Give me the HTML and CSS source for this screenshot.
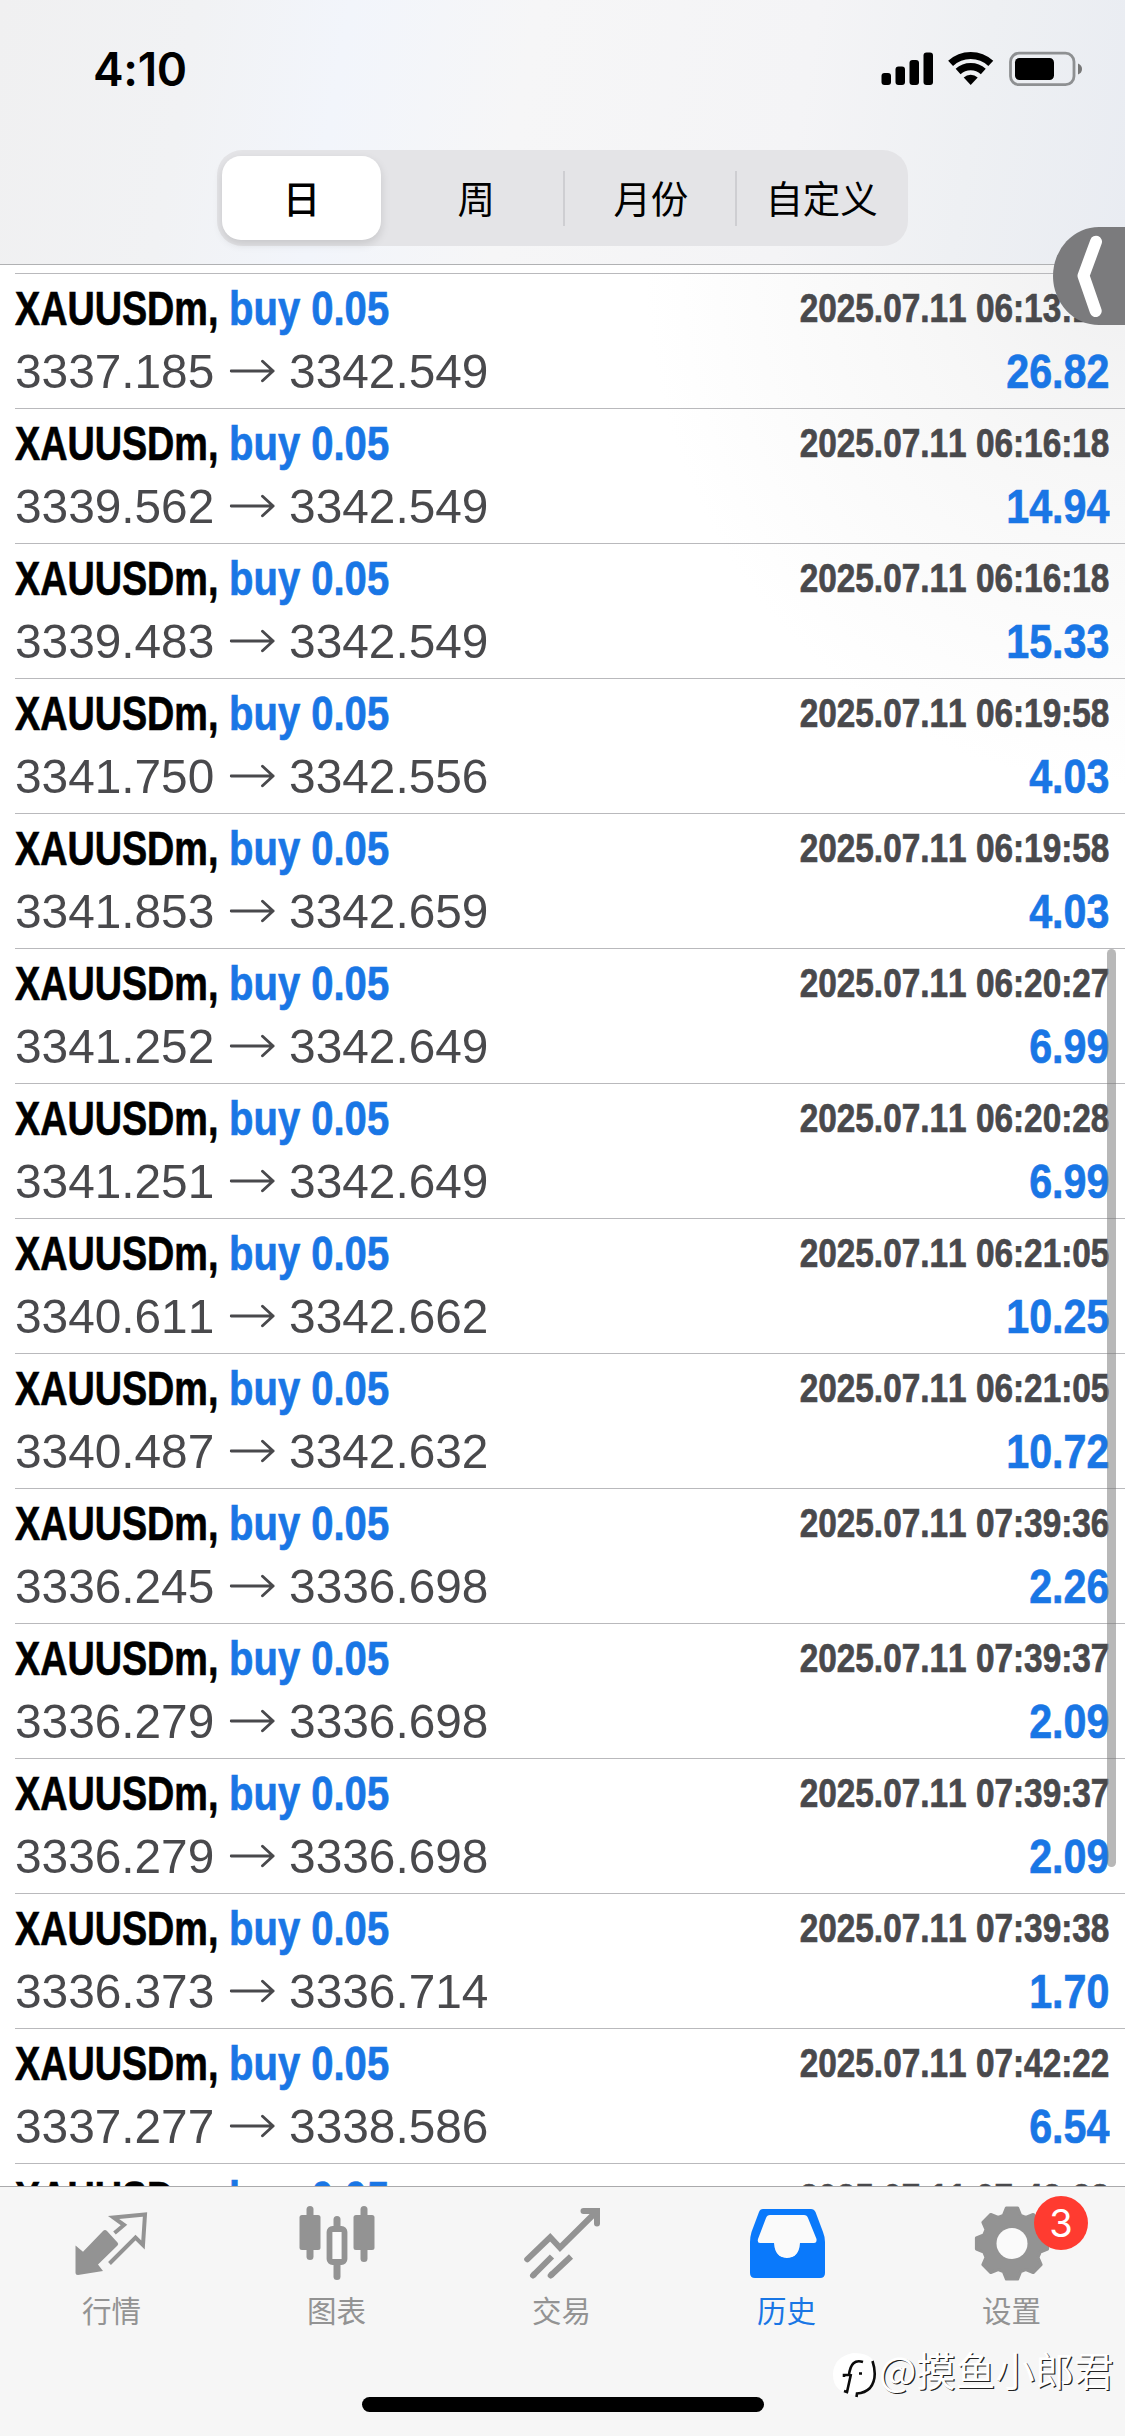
FILE: index.html
```html
<!DOCTYPE html>
<html lang="zh-CN">
<head>
<meta charset="utf-8">
<title>历史</title>
<link rel="stylesheet" href="styles.css">
</head>
<body>
<div class="screen">
  <header class="top">
    <div class="status">
      <span class="clock">4:10</span>
      <svg class="status-icons" viewBox="0 0 201 36" width="201" height="36">
        <rect x="0.500" y="22" width="9.500" height="12" rx="3"/><rect x="14.500" y="15.500" width="9.500" height="18.500" rx="3"/><rect x="28.500" y="9" width="9.500" height="25" rx="3"/><rect x="42.500" y="1.500" width="9.500" height="32.500" rx="3"/>
        <g fill="none" stroke="#000" stroke-width="7.200"><path d="M69.600 12.400A29.500 29.500 0 0 1 109.800 12.400"/><path d="M77.100 20.500A18.500 18.500 0 0 1 102.300 20.500"/></g>
        <path d="M82.700 26.500A10.300 10.300 0 0 1 96.700 26.500L89.700 34Z"/>
        <rect x="129.500" y="2.200" width="63.500" height="31.500" rx="8.500" fill="none" stroke="#8e9092" stroke-width="2.800"/>
        <rect x="134" y="7" width="39" height="22" rx="4.500"/><path d="M197 12.500Q201 14 201 18T197 23.500Z" fill="#777"/>
      </svg>
    </div>
    <nav class="segments">
      <span class="segment active">日</span><span class="segment">周</span><span class="segment split month">月份</span><span class="segment split">自定义</span>
    </nav>
  </header>
  <main class="list" id="list"></main>
  <footer class="tabs">
    <nav class="tab-row">
      <div class="tab"><svg viewBox="0 0 76 76"><path d="M1.500 39.500L9 45.700 29 25Q31 23 33 25L43.500 36.500Q45 38 43.500 39.500L24 58.500 29 65 4 69Q1.500 69 1.500 66.500Z"/><path fill="none" stroke="#939393" stroke-width="4" d="M40.500 27L50 19 39.500 11.500 71 8.500 69 39 61.500 31.500 35.500 57.500"/></svg><span>行情</span></div>
      <div class="tab"><svg viewBox="0 0 76 76"><rect x="0.500" y="9" width="21" height="35" rx="2.500"/><rect x="7.500" y="0" width="7" height="54" rx="3.500"/><rect x="54.500" y="9" width="21" height="35" rx="2.500"/><rect x="61.500" y="0" width="7" height="56" rx="3.500"/><rect x="34.500" y="10" width="7" height="14" rx="3.500"/><rect x="34.500" y="56" width="7" height="18" rx="3.500"/><rect x="30.500" y="23" width="15" height="33" rx="3" fill="#fafafa" stroke="#939393" stroke-width="5.800"/></svg><span>图表</span></div>
      <div class="tab"><svg viewBox="0 0 76 76"><g fill="none" stroke="#939393" stroke-width="6"><path stroke-linecap="round" d="M3.200 53.300L26.200 31.300 36 41.700 71 7"/><path stroke-linecap="round" d="M59.500 5H73V17.500"/><path stroke-linecap="round" d="M9 69.500L10 68.500M26.700 69.500L27.700 68.500"/><path d="M9 69.500L28 50.500M26.700 69.500L47 50.500"/></g></svg><span>交易</span></div>
      <div class="tab on"><svg viewBox="0 0 76 76"><path fill="#fafafa" d="M15 6H61L71 39H5Z"/><path d="M5 37H25Q26 52 38 52T51 37H71V60H5Z" fill="#0a79fb"/><path d="M24 36H52Q51 52 38 52T24 36Z" fill="#fafafa"/><path fill-rule="evenodd" d="M14 3H62Q65 3 66.500 6L74 26Q76 31 76 36V67Q76 72 71 72H6Q1 72 1 67V36Q1 31 2.500 26L10 6Q11 3 14 3ZM21 9Q18 9 17 12L9 33Q8 37 11 37H25Q26 52 38 52T51 37H65Q68 37 67.500 33L59 12Q58 9 55 9Z"/></svg><span>历史</span></div>
      <div class="tab"><svg viewBox="0 0 76 76" id="gear"></svg><span>设置</span><b class="badge">3</b></div>
    </nav>
    <div class="home"></div>
  </footer>
  <div class="scrollbar"></div>
  <div class="handle"><svg viewBox="0 0 72 98" width="72" height="98"><path d="M43 14.700L30.500 48.700 42.700 84" fill="none" stroke="#fff" stroke-width="12" stroke-linecap="round" stroke-linejoin="round"/></svg></div>
  <div class="watermark"><svg viewBox="0 0 46 48" width="46" height="48"><path d="M22 2Q42 2 43.500 14Q46 41 28 44L24 44Q2 42 2 24T22 2Z" fill="#fff"/><path d="M32 11Q20 7 18 24H13V26M20 23L16 41L13 40M41.500 10Q47 27 39 37Q34 42 26 42.500L25.500 46M28 22.500H31" fill="none" stroke="#0b0b0b" stroke-width="2.600"/></svg><span>@摸鱼小郎君</span></div>
</div>
<script src="script.js"></script>
</body>
</html>
```
FILE: styles.css
```css
* { box-sizing: border-box; }
body { margin: 0; background: #fff; font-family: "Liberation Sans", "Noto Sans CJK SC", sans-serif; }
.screen { position: relative; width: 1125px; height: 2436px; overflow: hidden; display: flex; flex-direction: column; background: #fff; }
.top { height: 265px; flex: none; border-bottom: 1px solid #b0b1b3; background: linear-gradient(100deg, #f0f0f1 0%, #f1f2f4 17%, #f2f5fb 30%, #f6f6f7 46%, #f4f4f6 70%, #eef0f3 85%, #e9ecf2 100%); }
.status { height: 150px; display: flex; justify-content: space-between; padding: 51px 43px 0 94px; }
.clock { font: 600 46px/37px Inter, sans-serif; letter-spacing: -0.3px; margin-left: -1px; }
.status-icons { flex: none; }
.segments { width: 691px; height: 96px; margin-left: 217px; display: grid; grid-template-columns: repeat(4, 1fr); border-radius: 25px; background: #e4e4e7; font: 400 37.500px/94px "Noto Sans CJK SC", sans-serif; text-align: center; }
.segment { height: 96px; }
.segment.active { height: 84px; line-height: 82px; margin: 6px 9px 6px 5px; background: #fff; border-radius: 19px; font-weight: 500; box-shadow: 0 4px 10px rgba(0,0,0,.13); }
.segment.split { background: linear-gradient(#ceced2, #ceced2) 0 21px / 2px 55px no-repeat; }
.segment.month { padding-left: 4px; }
.list { flex: 1; min-height: 0; overflow: hidden; padding-top: 8px; background: radial-gradient(ellipse 480px 520px at 100% 0, #f0f0f1, #f7f7f7 40%, #fff); }
.trade { height: 135px; margin-left: 15px; padding-right: 16px; border-top: 1px solid #b9b9bc; }
.line { display: flex; justify-content: space-between; height: 67px; align-items: flex-start; white-space: nowrap; }
.line > div { display: flex; }
.symbol, .side, .date, .value { display: block; transform-origin: 0 0; font-weight: 700; -webkit-text-stroke: .7px currentColor; }
.symbol { width: 214px; font-size: 48.500px; line-height: 54px; padding-top: 7px; transform: scaleX(.778); }
.side { font-size: 48.500px; line-height: 54px; padding-top: 7px; transform: scaleX(.825); color: #1976e5; }
.date, .value { transform-origin: 100% 0; font-kerning: none; }
.date { font-size: 40px; line-height: 44px; padding-top: 12px; color: #49494c; transform: scaleX(.834); }
.value { font-size: 48.500px; line-height: 54px; padding-top: 3px; color: #1976e5; transform: scaleX(.85); }
.line .prices { color: #49494c; font-size: 48.500px; font-kerning: none; line-height: 54px; padding-top: 3px; align-items: center; transform: scaleX(.985); transform-origin: 0 0; }
.arrow { width: 46px; height: 24px; margin: 0 14px 0 16px; fill: none; stroke: #49494c; stroke-width: 3; stroke-linecap: round; stroke-linejoin: round; }
.tabs { height: 250px; flex: none; border-top: 1px solid #aaaaac; background: #f6f6f6; }
.tab-row { display: grid; grid-template-columns: repeat(5, 225px); margin-left: -1px; height: 210px; }
.tab { position: relative; display: flex; flex-direction: column; align-items: center; padding-top: 19px; color: #939393; font: 400 29.500px/40px "Noto Sans CJK SC", sans-serif; }
.tab svg { width: 76px; height: 76px; fill: #939393; }
.tab span { margin-top: 7px; }
.tab.on { color: #1976e5; }
.tab.on svg { fill: #0a79fb; }
.badge { position: absolute; left: 135px; top: 9px; width: 54px; height: 54px; border-radius: 50%; background: #ff3b30; color: #fff; font: 400 38px/54px Inter, sans-serif; text-align: center; }
.home { width: 402px; height: 15px; border-radius: 8px; background: #000; margin-left: 362px; }
.scrollbar { position: absolute; left: 1107px; top: 949px; width: 9px; height: 918px; border-radius: 5px; background: rgba(120,120,120,.53); }
.handle { position: absolute; left: 1053px; top: 227px; width: 72px; height: 98px; border-radius: 46px 0 0 46px / 49px 0 0 49px; background: #7b7b7d; }
.watermark { position: absolute; left: 831px; top: 2351px; display: flex; align-items: flex-start; height: 48px; color: #fff; font: 400 39.500px/36px "Noto Sans CJK SC", sans-serif; text-shadow: 1.200px 1.200px 0 #222; white-space: nowrap; }
.watermark span { margin-left: 2px; }
```
FILE: script.js
```js
const trades = [
  ["3337.185", "3342.549", "06:13:18", "26.82"],
  ["3339.562", "3342.549", "06:16:18", "14.94"],
  ["3339.483", "3342.549", "06:16:18", "15.33"],
  ["3341.750", "3342.556", "06:19:58", "4.03"],
  ["3341.853", "3342.659", "06:19:58", "4.03"],
  ["3341.252", "3342.649", "06:20:27", "6.99"],
  ["3341.251", "3342.649", "06:20:28", "6.99"],
  ["3340.611", "3342.662", "06:21:05", "10.25"],
  ["3340.487", "3342.632", "06:21:05", "10.72"],
  ["3336.245", "3336.698", "07:39:36", "2.26"],
  ["3336.279", "3336.698", "07:39:37", "2.09"],
  ["3336.279", "3336.698", "07:39:37", "2.09"],
  ["3336.373", "3336.714", "07:39:38", "1.70"],
  ["3337.277", "3338.586", "07:42:22", "6.54"],
  ["", "", "07:42:23", ""]
];
document.getElementById("list").innerHTML = trades.map(([open, close, time, value]) => `
  <article class="trade">
    <div class="line"><div><span class="symbol">XAUUSDm,</span><span class="side">buy 0.05</span></div><span class="date">2025.07.11 ${time}</span></div>
    ${open ? `<div class="line"><div class="prices">${open}<svg class="arrow" viewBox="0 0 47 24"><path d="M1.500 12H45M34 2L45 12 34 22"/></svg>${close}</div><span class="value">${value}</span></div>` : ""}
  </article>`).join("");

// Eight-toothed settings gear with rounded corners and a round hole.
const points = [];
for (let i = 0; i < 8; i++) {
  for (const [angle, radius] of [[-17, 29.5], [-9, 36], [9, 36], [17, 29.5]]) {
    const a = (i * 45 + angle) * Math.PI / 180;
    points.push(`${(38 + radius * Math.sin(a)).toFixed(1)} ${(37.5 - radius * Math.cos(a)).toFixed(1)}`);
  }
}
document.getElementById("gear").innerHTML = `<path d="M${points.join("L")}Z" stroke="#939393" stroke-width="3" stroke-linejoin="round"/><circle cx="38" cy="37.5" r="15.500" fill="#fafafa"/>`;
```
